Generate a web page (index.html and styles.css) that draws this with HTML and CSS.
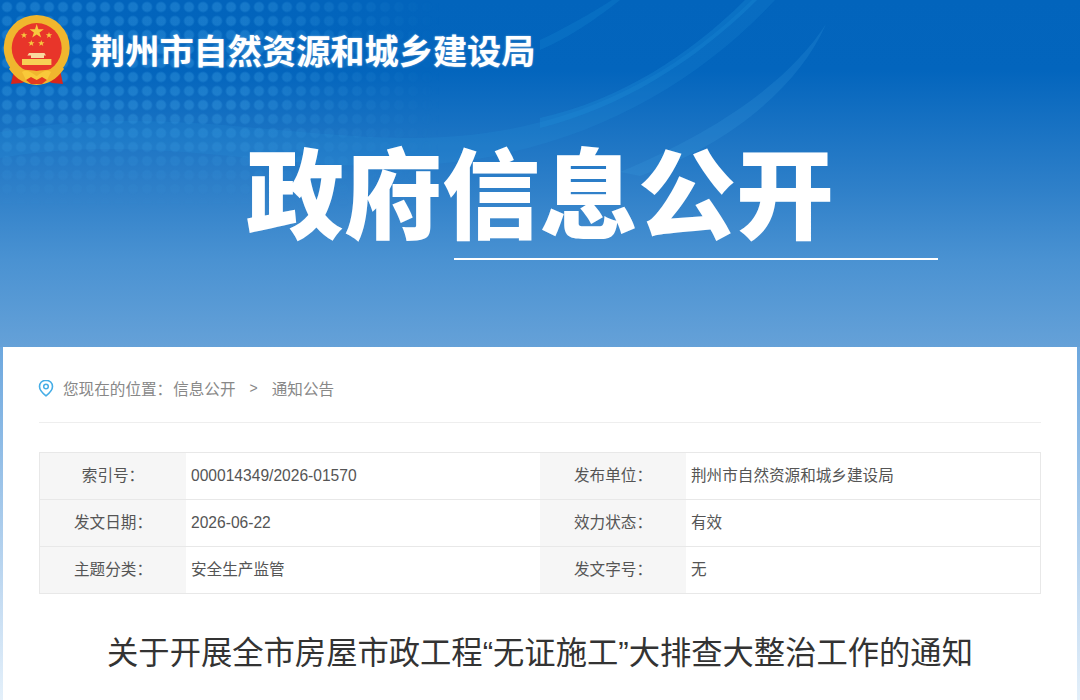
FILE: index.html
```html
<!DOCTYPE html>
<html lang="zh-CN">
<head>
    <meta charset="UTF-8">
    <title>政府信息公开</title>
    <link rel="stylesheet" href="styles.css">
</head>
<body>

<div class="banner">
    <svg class="waves" viewBox="0 0 1080 347">
        <path d="M0 132C180 100 320 150 470 135C590 122 680 70 752 0L775 0C700 80 600 140 470 160C310 184 170 128 0 158Z" fill="#2b9be0" opacity="0.16"/>
        <path d="M540 118C620 100 690 55 745 0L757 0C695 62 620 108 540 128Z" fill="#1f94dc" opacity="0.28"/>
        <path d="M620 172C720 130 790 80 826 24C800 85 730 145 640 176Z" fill="#3aa0e0" opacity="0.2"/>
        <path d="M540 40C565 28 590 14 612 0L620 0C595 20 568 38 540 50Z" fill="#1f94dc" opacity="0.2"/>
    </svg>
    <div class="dots"></div>
    <div class="siteHead">
        <svg class="emblem" viewBox="0 0 80 95">
            <path d="M14 70L11 84L22 83L31 79L22 68Z" fill="#d9261c"/>
            <path d="M60 70L63 84L52 83L43 79L52 68Z" fill="#d9261c"/>
            <circle cx="36.700" cy="48" r="33" fill="#f0b62e"/>
            <circle cx="36.700" cy="48" r="25" fill="#e8352a"/>
            <path d="M36.700 24l1.700 5.200h5.500l-4.400 3.200 1.700 5.200-4.500-3.200-4.500 3.200 1.700-5.200-4.400-3.200h5.500z" fill="#f7c93f"/>
            <path d="M24 32l.8 2.300h2.400l-1.900 1.400.7 2.300-2-1.400-2 1.400.7-2.300-1.900-1.400h2.400z" fill="#f7c93f"/>
            <path d="M49 32l.8 2.300h2.400l-1.900 1.400.7 2.300-2-1.400-2 1.400.7-2.300-1.900-1.400h2.400z" fill="#f7c93f"/>
            <path d="M31.300 40l.8 2.300h2.400l-1.900 1.400.7 2.300-2-1.400-2 1.400.7-2.300-1.900-1.400h2.400z" fill="#f7c93f"/>
            <path d="M41.300 40l.8 2.300h2.400l-1.900 1.400.7 2.300-2-1.400-2 1.400.7-2.300-1.900-1.400h2.400z" fill="#f7c93f"/>
            <path d="M29 53h15.400l1.600 2.500h-2v2.500h-13v-2.500h-3.600z" fill="#f9d9a0"/>
            <path d="M22 59h29.400v6h-29.400z" fill="#f7cf55"/>
            <path d="M12 64C20 72 29 69 36.700 71C44 69 53 72 61 64L64 69C56 80 48 84 36.700 85C25 84 17 80 9 69Z" fill="#f0b62e"/>
            <path d="M22 72C27 68 33 74 36.700 76C40 74 46 68 51 72L47 80L41 84H32L26 80Z" fill="#f9c93a"/>
            <path d="M26 80L31 77L36.700 80L42 77L47 80L42 84H31Z" fill="#e33a20"/>
        </svg>
        <div class="siteName">荆州市自然资源和城乡建设局</div>
    </div>
    <div class="bigTitle">政府信息公开</div>
    <div class="titleLine"></div>
</div>

<div class="card">
    <div class="crumbs">
        <svg class="pin" viewBox="0 0 16 18">
            <path d="M8 1.200C4.200 1.200 1.500 4 1.500 7.500C1.500 11 5 14.500 8 16.800C11 14.500 14.500 11 14.500 7.500C14.500 4 11.800 1.200 8 1.200Z" fill="none" stroke="#45ade6" stroke-width="1.600"/>
            <circle cx="8" cy="7.500" r="2.300" fill="none" stroke="#45ade6" stroke-width="1.500"/>
        </svg>
        <span class="here">您现在的位置：</span>
        <span>信息公开</span>
        <span class="arrow">&gt;</span>
        <span>通知公告</span>
    </div>

    <div class="metaTable">
        <div class="metaLabel">索引号：</div>
        <div class="metaValue">000014349/2026-01570</div>
        <div class="metaLabel">发布单位：</div>
        <div class="metaValue">荆州市自然资源和城乡建设局</div>

        <div class="metaLabel">发文日期：</div>
        <div class="metaValue">2026-06-22</div>
        <div class="metaLabel">效力状态：</div>
        <div class="metaValue">有效</div>

        <div class="metaLabel">主题分类：</div>
        <div class="metaValue">安全生产监管</div>
        <div class="metaLabel">发文字号：</div>
        <div class="metaValue">无</div>
    </div>

    <h1 class="docTitle">关于开展全市房屋市政工程“无证施工”大排查大整治工作的通知</h1>
</div>

</body>
</html>
```

FILE: styles.css
```css
html, body {
    height: 700px;
    overflow: hidden;
}
body {
    margin: 0;
    font-family: "Liberation Sans", "Noto Sans CJK SC", sans-serif;
    background: linear-gradient(to bottom, #6ca7de 347px, #c5dcf2 600px, #e4f0fa 700px);
}
.banner {
    position: relative;
    height: 347px;
    overflow: hidden;
    display: flex;
    flex-direction: column;
    background: linear-gradient(to bottom, #0264bc 0, #0365bd 70px, #2f80c9 190px, #4a92d2 260px, #65a1d8 347px);
}
.dots {
    position: absolute;
    left: 0;
    top: 0;
    width: 440px;
    height: 210px;
    background-image: radial-gradient(circle, rgba(70,170,235,0.3) 0, rgba(70,170,235,0.3) 4px, transparent 6px);
    background-size: 14px 14px;
    -webkit-mask-image: linear-gradient(to right, #000 0, #000 55%, transparent 100%), linear-gradient(to bottom, #000 0, #000 50%, transparent 100%);
    -webkit-mask-composite: source-in;
    mask-image: linear-gradient(to right, #000 0, #000 55%, transparent 100%), linear-gradient(to bottom, #000 0, #000 50%, transparent 100%);
    mask-composite: intersect;
}
.waves {
    position: absolute;
    left: 0;
    top: 0;
    width: 1080px;
    height: 347px;
}
.siteHead {
    position: relative;
    display: flex;
    align-items: flex-start;
    height: 136px;
}
.emblem {
    width: 80px;
    height: 95px;
    flex-shrink: 0;
}
.siteName {
    margin: 29px 0 0 11px;
    font-size: 34.200px;
    line-height: 46px;
    font-weight: 700;
    color: #fff;
    white-space: nowrap;
    text-shadow: 0 0 2px rgba(255,255,255,0.5);
}
.bigTitle {
    position: relative;
    text-align: center;
    font-size: 98px;
    line-height: 122px;
    font-weight: 900;
    color: #fff;
    white-space: nowrap;
}
.titleLine {
    position: relative;
    width: 484px;
    height: 2px;
    margin: 0 0 0 454px;
    background: #fff;
}
.card {
    margin: 0 3px;
    height: 353px;
    padding: 0 36px;
    background: #fff;
}
.crumbs {
    display: flex;
    align-items: center;
    height: 76px;
    padding-top: 7px;
    box-sizing: border-box;
    border-bottom: 1px solid #eee;
    font-size: 15.600px;
    color: #888;
}
.pin {
    width: 16px;
    height: 18px;
    margin: 0 9px 0 -1px;
}
.here {
    margin-right: 1px;
}
.arrow {
    margin: 0 14px;
    font-size: 14px;
}
.metaTable {
    display: grid;
    grid-template-columns: 146px 354px 146px 1fr;
    grid-auto-rows: 47px;
    margin-top: 29px;
    border: 1px solid #e8e8e8;
    border-width: 1px 1px 0 1px;
    font-size: 15.600px;
    line-height: 18px;
    color: #555;
}
.metaLabel, .metaValue {
    display: flex;
    align-items: center;
    box-sizing: border-box;
    border-bottom: 1px solid #e8e8e8;
}
.metaLabel {
    justify-content: center;
    background: #f6f6f6;
}
.metaValue {
    padding-left: 5px;
}
.docTitle {
    margin: 40px 0 0;
    text-align: center;
    font-size: 31.300px;
    line-height: 40px;
    font-weight: 400;
    color: #333;
    white-space: nowrap;
}
```
